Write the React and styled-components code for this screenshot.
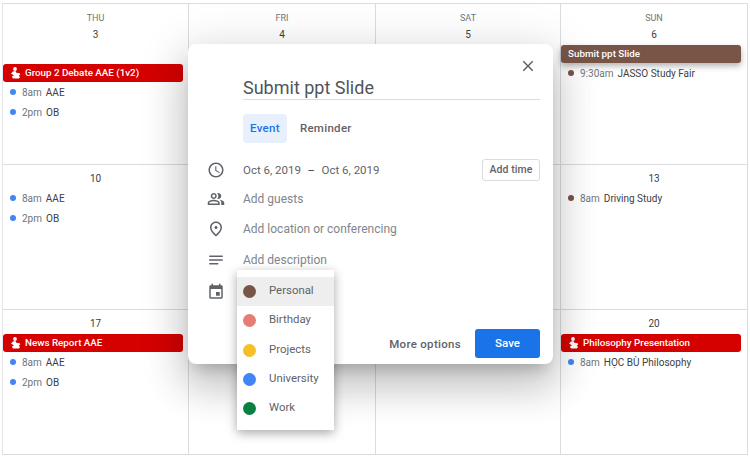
import styled, { createGlobalStyle } from 'styled-components';
import { MdAccessTime, MdClose, MdEvent, MdOutlinePeopleAlt, MdOutlinePlace, MdNotes } from 'react-icons/md';

const GlobalStyle = createGlobalStyle`
  html, body {
    margin: 0;
    background: #fff;
    font-family: Roboto, "Liberation Sans", sans-serif;
    overflow: hidden;
  }
`;

const Page = styled.div`
  position: relative;
  width: 750px;
  height: 458px;
  padding: 3px 0 0 2px;
  box-sizing: border-box;
  overflow: hidden;
`;

const CalendarGrid = styled.div`
  display: grid;
  grid-template-columns: 186px 187px 185px 187px;
  grid-template-rows: 161px 145px 145px;
  width: 746px;
  border-top: 1px solid #dadce0;
  border-left: 1px solid #e3e5e8;
  box-sizing: border-box;
`;

const Cell = styled.div`
  border-right: 1px solid #dadce0;
  border-bottom: 1px solid #dadce0;
  padding-top: ${(props) => (props.$weekday ? '9px' : '6px')};
  box-sizing: border-box;
  min-width: 0;
`;

const Weekday = styled.div`
  color: #70757a;
  font-size: 9px;
  line-height: 11px;
  text-align: center;
`;

const DayNumber = styled.div`
  color: #3c4043;
  font-size: 10px;
  line-height: 15px;
  height: 14px;
  text-align: center;
  margin-top: ${(props) => (props.$first ? '3px' : '0')};
  margin-bottom: ${(props) => (props.$first ? '4px' : '3px')};
`;

const EventBar = styled.div`
  display: flex;
  align-items: center;
  gap: 4px;
  width: 180px;
  height: 18px;
  padding: 0 0 1px 7px;
  box-sizing: border-box;
  border-radius: 3px;
  background: ${(props) => props.color};
  box-shadow: ${(props) => (props.$raised ? '0 3px 6px rgba(0, 0, 0, 0.3)' : 'none')};
  color: #fff;
  font-size: 9.8px;
  font-weight: 500;
  white-space: nowrap;
  margin-top: ${(props) => (props.$gap ? '23px' : props.$raised ? '0' : '4px')};
`;

const EventItem = styled.div`
  display: flex;
  align-items: center;
  height: 20px;
  padding-left: 7px;
  font-size: 10px;
  white-space: nowrap;
  color: #3c4043;
`;

const Dot = styled.span`
  width: 6px;
  height: 6px;
  border-radius: 50%;
  background: ${(props) => props.color};
  margin-right: 6px;
  flex-shrink: 0;
`;

const EventTime = styled.span`
  color: #70757a;
  margin-right: 4px;
`;

const Dialog = styled.div`
  position: absolute;
  left: 188px;
  top: 44px;
  width: 365px;
  height: 320px;
  box-sizing: border-box;
  padding: 13px 13px 6px 0;
  background: #fff;
  border-radius: 8px;
  box-shadow: 0 24px 38px 3px rgba(0, 0, 0, 0.14), 0 9px 46px 8px rgba(0, 0, 0, 0.12), 0 11px 15px -7px rgba(0, 0, 0, 0.2);
  display: flex;
  flex-direction: column;
`;

const CloseRow = styled.div`
  display: flex;
  justify-content: flex-end;
  height: 19px;
  padding-right: 3px;
  color: #5f6368;
  font-size: 18px;
`;

const Body = styled.div`
  padding-left: 55px;
`;

const TitleInput = styled.div`
  color: #50555a;
  font-size: 18px;
  line-height: 24px;
  height: 23px;
  border-bottom: 1px solid #dadce0;
`;

const Tabs = styled.div`
  display: flex;
  align-items: center;
  gap: 6px;
  margin-top: 14px;
`;

const Tab = styled.div`
  height: 29px;
  line-height: 29px;
  padding: 0 7px;
  border-radius: 4px;
  font-size: 11.5px;
  font-weight: 500;
  letter-spacing: 0.3px;
  color: ${(props) => (props.$active ? '#1a73e8' : '#5f6368')};
  background: ${(props) => (props.$active ? '#e8f0fe' : 'transparent')};
`;

const FormRows = styled.div`
  display: flex;
  flex-direction: column;
  margin-top: 13px;
`;

const FormRow = styled.div`
  display: flex;
  align-items: center;
  height: ${(props) => props.$height || '30px'};
  padding-left: 18px;
  color: #80868b;
  font-size: 12px;
`;

const IconSlot = styled.div`
  display: flex;
  align-items: center;
  justify-content: center;
  width: 20px;
  margin-right: 17px;
  color: #5f6368;
  font-size: 18px;
`;

const DateText = styled.span`
  flex: 1;
  color: #5f6368;
  font-size: 11.5px;
`;

const Dash = styled.span`
  margin: 0 6.5px;
  color: #3c4043;
`;

const OutlineButton = styled.div`
  width: 58px;
  height: 22px;
  line-height: 20px;
  box-sizing: border-box;
  border: 1px solid #dadce0;
  border-radius: 3px;
  color: #5f6368;
  font-size: 10.5px;
  font-weight: 500;
  letter-spacing: 0.1px;
  text-align: center;
`;

const Footer = styled.div`
  display: flex;
  align-items: center;
  justify-content: flex-end;
  gap: 14px;
  margin-top: auto;
`;

const TextButton = styled.div`
  color: #5f6368;
  font-size: 11.5px;
  font-weight: 500;
  letter-spacing: 0.3px;
`;

const SaveButton = styled.div`
  width: 65px;
  height: 29px;
  line-height: 29px;
  border-radius: 3px;
  background: #1a73e8;
  color: #fff;
  font-size: 11.5px;
  font-weight: 500;
  text-align: center;
`;

const CalendarMenu = styled.div`
  position: absolute;
  left: 49px;
  top: 226px;
  width: 97px;
  box-sizing: border-box;
  padding: 7px 0;
  background: #fff;
  box-shadow: 0 3px 10px rgba(0, 0, 0, 0.35);
`;

const MenuItem = styled.div`
  display: flex;
  align-items: center;
  height: 29.3px;
  padding-left: 6px;
  background: ${(props) => (props.$selected ? '#eeeeee' : 'transparent')};
  color: #5f6368;
  font-size: 11.4px;
`;

const Swatch = styled.span`
  width: 13px;
  height: 13px;
  border-radius: 50%;
  background: ${(props) => props.color};
  margin-right: 13px;
`;

const MenuLabel = styled.span`
  padding-bottom: 3px;
`;

const HandGlyph = () => (
  <svg width="11" height="12" viewBox="0 0 11 12" fill="#fff">
    <circle cx="5" cy="2" r="1.9" />
    <path d="M1 6.4 3 4.6 5.4 4 6.4 5.8 9.8 6.2 10.2 7.8 8.8 8.4 10 10.2 8.8 11.6H3L1.8 9.6 4 8.4Z" />
  </svg>
);

const blue = '#4285f4';
const brown = '#795548';
const red = '#d50000';

const cells = [
  { weekday: 'THU', day: 3, bar: 'Group 2 Debate AAE (1v2)', barGap: true, items: [['8am', 'AAE', blue], ['2pm', 'OB', blue]] },
  { weekday: 'FRI', day: 4, items: [] },
  { weekday: 'SAT', day: 5, items: [] },
  { weekday: 'SUN', day: 6, bar: 'Submit ppt Slide', plain: true, items: [['9:30am', 'JASSO Study Fair', brown]] },
  { day: 10, items: [['8am', 'AAE', blue], ['2pm', 'OB', blue]] },
  { items: [] },
  { items: [] },
  { day: 13, items: [['8am', 'Driving Study', brown]] },
  { day: 17, bar: 'News Report AAE', items: [['8am', 'AAE', blue], ['2pm', 'OB', blue]] },
  { items: [] },
  { items: [] },
  { day: 20, bar: 'Philosophy Presentation', items: [['8am', 'HỌC BÙ Philosophy', blue]] },
];

const menuItems = [
  ['Personal', brown],
  ['Birthday', '#e67c73'],
  ['Projects', '#f6bf26'],
  ['University', blue],
  ['Work', '#0b8043'],
];

export default function App() {
  return (
    <Page>
      <GlobalStyle />
      <CalendarGrid>
        {cells.map((cell, index) => (
          <Cell key={index} $weekday={cell.weekday}>
            {cell.weekday && <Weekday>{cell.weekday}</Weekday>}
            {cell.day && <DayNumber $first={cell.weekday}>{cell.day}</DayNumber>}
            {cell.bar && (
              <EventBar color={cell.plain ? brown : red} $raised={cell.plain} $gap={cell.barGap}>
                {!cell.plain && <HandGlyph />}
                {cell.bar}
              </EventBar>
            )}
            {cell.items.map(([time, name, color]) => (
              <EventItem key={time}>
                <Dot color={color} />
                <EventTime>{time}</EventTime>
                {name}
              </EventItem>
            ))}
          </Cell>
        ))}
      </CalendarGrid>

      <Dialog>
        <CloseRow><MdClose /></CloseRow>
        <Body>
          <TitleInput>Submit ppt Slide</TitleInput>
          <Tabs>
            <Tab $active>Event</Tab>
            <Tab>Reminder</Tab>
          </Tabs>
        </Body>
        <FormRows>
          <FormRow $height="28px">
            <IconSlot><MdAccessTime /></IconSlot>
            <DateText>Oct 6, 2019<Dash>–</Dash>Oct 6, 2019</DateText>
            <OutlineButton>Add time</OutlineButton>
          </FormRow>
          <FormRow>
            <IconSlot><MdOutlinePeopleAlt /></IconSlot>
            Add guests
          </FormRow>
          <FormRow>
            <IconSlot><MdOutlinePlace /></IconSlot>
            Add location or conferencing
          </FormRow>
          <FormRow $height="31px">
            <IconSlot><MdNotes /></IconSlot>
            Add description
          </FormRow>
          <FormRow $height="33px">
            <IconSlot><MdEvent /></IconSlot>
          </FormRow>
        </FormRows>
        <Footer>
          <TextButton>More options</TextButton>
          <SaveButton>Save</SaveButton>
        </Footer>
        <CalendarMenu>
          {menuItems.map(([label, color], index) => (
            <MenuItem key={label} $selected={index === 0}>
              <Swatch color={color} />
              <MenuLabel>{label}</MenuLabel>
            </MenuItem>
          ))}
        </CalendarMenu>
      </Dialog>
    </Page>
  );
}
